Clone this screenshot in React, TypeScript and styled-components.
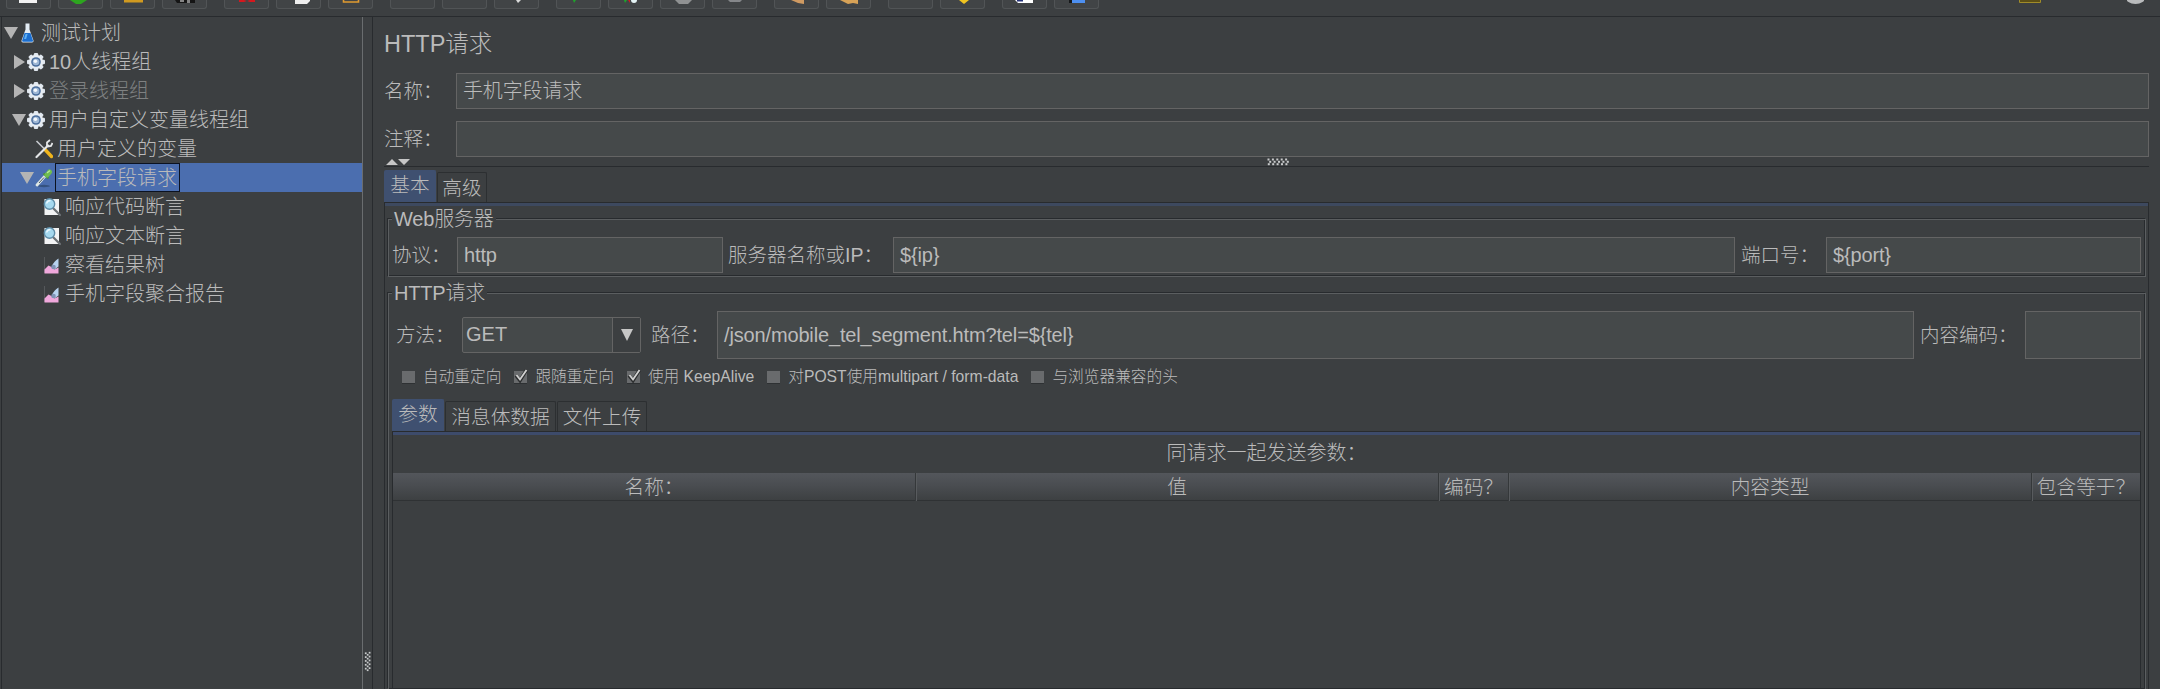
import React from "react";
import styled, { createGlobalStyle } from "styled-components";

const color = {
  bg: "#3c3f41",
  field: "#45494a",
  line: "#646464",
  dark: "#282b2e",
  etch: "#5b5e60",
  text: "#bbbbbb",
  muted: "#7f8182",
  selected: "#4b6eaf",
  tab: "#3f5070",
};

const GlobalStyle = createGlobalStyle`
  * {
    box-sizing: border-box;
  }

  body {
    margin: 0;
    overflow: hidden;
    background: ${color.bg};
    color: ${color.text};
    font-family: "Liberation Sans", "Noto Sans CJK SC", sans-serif;
    font-size: 20px;
    font-weight: 300;
  }
`;

const Window = styled.div`
  display: flex;
  flex-direction: column;
  width: 2160px;
  height: 689px;
  overflow: hidden;
`;

const Toolbar = styled.div`
  display: flex;
  align-items: flex-start;
  flex: none;
  height: 17px;
  padding: 0 16px 0 6px;
  border-bottom: 1px solid ${color.dark};
`;

const ToolGroup = styled.div`
  display: flex;
  gap: 7px;
  margin-right: 17px;
`;

const ToolButton = styled.div`
  width: 45px;
  height: 9px;
  border: 1px solid #515456;
  border-top: 0;
  border-radius: 0 0 3px 3px;
  background: #414446;

  svg {
    display: block;
    margin-left: -1px;
  }
`;

const Indicators = styled.div`
  display: flex;
  gap: 86px;
  margin-left: auto;

  svg {
    display: block;
  }
`;

const Body = styled.div`
  display: flex;
  flex: 1;
  min-height: 0;
`;

const Tree = styled.div`
  flex: none;
  width: 362px;
  margin-left: 1px;
  padding-top: 1px;
  border-left: 1px solid ${color.dark};
  border-right: 1px solid #6a6d6f;
`;

const TreeRow = styled.div<{ $level: number; $selected?: boolean; $disabled?: boolean }>`
  display: flex;
  align-items: center;
  height: 29px;
  padding-left: ${(p) => 2 + p.$level * 8}px;
  background: ${(p) => (p.$selected ? color.selected : "transparent")};
  color: ${(p) => (p.$disabled ? color.muted : color.text)};
  white-space: nowrap;
`;

const Toggle = styled.span`
  flex: none;
  width: 15px;
  height: 14px;

  svg {
    display: block;
  }
`;

const TreeIcon = styled.span`
  flex: none;
  width: 18px;
  height: 20px;
  margin-right: 2px;

  svg {
    display: block;
  }
`;

const TreeLabel = styled.span<{ $focused?: boolean }>`
  height: 29px;
  padding: 0 2px 0 1px;
  border: 1px solid ${(p) => (p.$focused ? "#0b1220" : "transparent")};
  line-height: 28px;
`;

const SideDivider = styled.div`
  display: flex;
  align-items: flex-end;
  flex: none;
  width: 10px;
  padding: 0 1px 15px;
  border-right: 1px solid ${color.dark};
`;

const Main = styled.main`
  display: flex;
  flex-direction: column;
  flex: 1;
  min-width: 0;
  padding: 13px 11px 0;
`;

const Title = styled.h1`
  height: 28px;
  margin: 0;
  font-size: 23.5px;
  font-weight: 300;
  line-height: 28px;
`;

const FormRow = styled.div`
  display: flex;
  align-items: center;
  height: 36px;
  margin-top: 12px;

  ${Title} + & {
    margin-top: 15px;
  }
`;

const Label = styled.span<{ $width: number; $pad?: number }>`
  flex: none;
  width: ${(p) => p.$width}px;
  padding-left: ${(p) => p.$pad ?? 0}px;
  font-size: 19.5px;
  line-height: 24px;
  white-space: nowrap;
`;

const Field = styled.div<{ $width?: number; $height?: number }>`
  flex: ${(p) => (p.$width ? "none" : 1)};
  width: ${(p) => (p.$width ? `${p.$width}px` : "auto")};
  height: ${(p) => p.$height ?? 36}px;
  padding-left: 6px;
  border: 1px solid ${color.line};
  background: ${color.field};
  letter-spacing: -0.15px;
  line-height: ${(p) => (p.$height ?? 36) - 2}px;
`;

const SplitBar = styled.div`
  display: grid;
  grid-template-columns: 1fr auto 1fr;
  align-items: center;
  flex: none;
  height: 10px;
  padding-left: 24px;
  border-bottom: 1px solid ${color.dark};

  svg {
    display: block;
  }
`;

const SplitArrows = styled.div`
  margin-left: -24px;
`;

const Tabs = styled.div<{ $top: number }>`
  display: flex;
  align-items: flex-end;
  flex: none;
  height: 32px;
  margin-top: ${(p) => p.$top}px;
`;

const Tab = styled.div<{ $width: number; $active?: boolean }>`
  width: ${(p) => p.$width}px;
  height: ${(p) => (p.$active ? 32 : 30)}px;
  margin-right: 1px;
  border: 1px solid ${(p) => (p.$active ? color.tab : "#2c2f31")};
  border-bottom: 0;
  border-radius: 2px 2px 0 0;
  background: ${(p) => (p.$active ? color.tab : "transparent")};
  font-size: 19.7px;
  line-height: ${(p) => (p.$active ? 29 : 30)}px;
  text-align: center;
  white-space: nowrap;
`;

const Page = styled.div`
  display: flex;
  flex-direction: column;
  flex: 1;
  min-height: 0;
  padding: 16px 2px 0 3px;
  border: 1px solid ${color.dark};
  border-bottom: 0;
  box-shadow: inset 0 3px 0 #3d495f;
`;

const Group = styled.section<{ $fill?: boolean }>`
  display: flex;
  flex-direction: column;
  flex: ${(p) => (p.$fill ? 1 : "none")};
  height: ${(p) => (p.$fill ? "auto" : "58px")};
  min-height: 0;
  margin-bottom: ${(p) => (p.$fill ? 0 : 16)}px;
  padding: 0 4px 0 3px;
  border: 1px solid ${color.etch};
  border-bottom-width: ${(p) => (p.$fill ? 0 : 1)}px;
  box-shadow: -1px -1px 0 ${color.dark}, inset -1px -1px 0 ${color.dark};
`;

const GroupTitle = styled.h2`
  align-self: flex-start;
  height: 24px;
  margin: -13px 0 0;
  padding: 0 2px;
  background: ${color.bg};
  font-size: 20px;
  font-weight: 300;
  letter-spacing: -0.2px;
  line-height: 24px;
`;

const GroupRow = styled.div<{ $top: number; $height: number; $left?: number }>`
  display: flex;
  align-items: center;
  flex: none;
  height: ${(p) => p.$height}px;
  margin-top: ${(p) => p.$top}px;
  padding-left: ${(p) => p.$left ?? 0}px;
`;

const Select = styled.div`
  display: flex;
  flex: none;
  width: 179px;
  height: 36px;
  border: 1px solid ${color.line};
  border-radius: 2px;
  background: ${color.field};
`;

const SelectValue = styled.span`
  flex: 1;
  padding-left: 3px;
  line-height: 33px;
`;

const SelectArrow = styled.span`
  display: flex;
  align-items: center;
  justify-content: center;
  width: 28px;
  border-left: 1px solid ${color.line};
  background: ${color.bg};
`;

const Checks = styled.div`
  display: flex;
  align-items: center;
  flex: none;
  height: 24px;
  margin-top: 6px;
  padding-left: 9px;
  gap: 12px;
  font-size: 15.7px;
  line-height: 24px;
`;

const Check = styled.div`
  display: flex;
  align-items: center;
  gap: 7px;
  white-space: nowrap;

  svg {
    display: block;
  }
`;

const InnerPage = styled.div`
  display: flex;
  flex-direction: column;
  flex: 1;
  min-height: 0;
  border: 1px solid ${color.dark};
  border-bottom: 0;
  box-shadow: inset 0 3px 0 #3d4b6b;
`;

const Caption = styled.div`
  height: 41px;
  padding-top: 9px;
  line-height: 24px;
  text-align: center;
`;

const HeadRow = styled.div`
  display: grid;
  grid-template-columns: 523px 523px 70px 523px 1fr;
  height: 28px;
  border-bottom: 1px solid #2f3234;
  background: linear-gradient(#53565b, #4a4d51 45%, #3d4042);
`;

const HeadCell = styled.div`
  border-right: 1px solid #35383a;
  box-shadow: 1px 0 0 #585b5e;
  font-size: 19.7px;
  line-height: 28px;
  text-align: center;
  white-space: nowrap;

  &:last-child {
    border-right: 0;
    box-shadow: none;
  }
`;

const toolGroups: React.ReactNode[][] = [
  [
    <path d="M13 0h18v3H13z" fill="#f2f2f2" />,
    <path d="M12 0h17l-6 4h-5z" fill="#2da51f" />,
    <path d="M14 0h19v2.5H14z" fill="#d19a20" />,
    <>
      <path d="M13 0h20v3H15z" fill="#151515" />
      <path d="M18 0h4v2h-4zM25 0h3v3h-3z" fill="#858585" />
    </>,
  ],
  [
    <path d="M15 0h5l3 1 3-1h5v2h-5l-3-1-3 1h-5z" fill="#d5181e" />,
    <path d="M19 0h15v1l-3 3H19z" fill="#eeeeee" />,
    <path d="M15.5 0v2h15V0" fill="none" stroke="#e09a30" strokeWidth="1.6" />,
  ],
  [null, null, <path d="M22 0h5l-3 3z" fill="#dadada" />],
  [
    <path d="M17 0h3l-2 3z" fill="#1fa32a" />,
    <>
      <path d="M16 0h3l-2 3z" fill="#1fa32a" />
      <path d="M20 0h2v3z" fill="#d5181e" />
      <circle cx="26" cy="0" r="3" fill="#e4f3f5" />
    </>,
    <path d="M15 0h17l-4 4h-9z" fill="#8f9192" />,
    <path d="M16 0h14l-2 2H18z" fill="#85878a" />,
  ],
  [
    <path d="M17 0h13v4l-6-1z" fill="#cf9a62" />,
    <path d="M14 0h18v4l-5-1-5 1-4-2z" fill="#d7a257" />,
  ],
  [null, <path d="M19 0h10l-5 4z" fill="#f0c420" />],
  [
    <>
      <path d="M13 0h18v3H16z" fill="#ffffff" />
      <path d="M15 0h6v1.5h-6z" fill="#26337a" />
    </>,
    <>
      <path d="M15 0h4v3h-4z" fill="#16181a" />
      <path d="M18 0h13v3H18z" fill="#4d8ff0" />
    </>,
  ],
];

const GearIcon = () => (
  <svg width="18" height="20" viewBox="0 0 18 20">
    {[0, 45, 90, 135].map((angle) => (
      <rect
        key={angle}
        x="6.8"
        y="1"
        width="4.4"
        height="18"
        rx="1.2"
        fill="#dfe6ee"
        transform={`rotate(${angle} 9 10)`}
      />
    ))}
    <circle cx="9" cy="10" r="7.2" fill="#e8edf3" />
    <circle cx="9" cy="10" r="4.8" fill="#4a6d9c" />
    <circle cx="9" cy="10" r="3.3" fill="#9fb8d6" />
    <circle cx="8.4" cy="9.2" r="1.8" fill="#f4f8fc" />
  </svg>
);

const FlaskIcon = () => (
  <svg width="18" height="20" viewBox="0 0 18 20">
    <path d="M6.5 0.5h4v6l4 11q.4 2-1.5 2H4q-2 0-1.5-2l4-11z" fill="#e3ecf4" />
    <path d="M5.5 10h6l2.5 7.5q.2 1.2-1 1.2H4.2q-1.3 0-1-1.2z" fill="#1c6fd0" />
    <path d="M6.6 11h2l-1.500 5H5z" fill="#5fb0f2" />
  </svg>
);

const ToolsIcon = () => (
  <svg width="18" height="20" viewBox="0 0 18 20">
    <path d="M1.5 2l9 9" stroke="#c8ccd0" strokeWidth="1.6" />
    <path d="M10 10.5l6.5 7" stroke="#f0b51c" strokeWidth="3.4" strokeLinecap="round" />
    <path d="M1.5 18L13 6.5" stroke="#e4e6e8" strokeWidth="2.2" strokeLinecap="round" />
    <path d="M12 7.5V3.5l3-2.5M12.5 7.5l3.5-.5 1.5-3" fill="none" stroke="#e4e6e8" strokeWidth="1.8" />
  </svg>
);

const DropperIcon = () => (
  <svg width="18" height="20" viewBox="0 0 18 20">
    <ellipse cx="9" cy="18" rx="6" ry="1.2" fill="#35527f" />
    <path d="M2 17L11 7" stroke="#dfe7e4" strokeWidth="2.8" strokeLinecap="round" />
    <path d="M4 15L9 9.5" stroke="#4a5a68" strokeWidth="1" />
    <path d="M8.5 5.5l5 5" stroke="#4c8f3a" strokeWidth="1.8" />
    <path d="M12 7L14.500 4" stroke="#6fbd4e" strokeWidth="5" strokeLinecap="round" />
    <path d="M12.5 4.5l2-1.5" stroke="#b8e79c" strokeWidth="1.5" strokeLinecap="round" />
  </svg>
);

const SearchIcon = () => (
  <svg width="18" height="20" viewBox="0 0 18 20">
    <path d="M1.5 2h14.500v16H1.5z" fill="#f2f3f4" />
    <path d="M10 11l7 7" stroke="#6b7074" strokeWidth="2.2" strokeLinecap="round" />
    <circle cx="6.5" cy="7" r="5.2" fill="#a5d8ee" stroke="#5f8da8" strokeWidth="1.4" />
    <path d="M3.5 6.5q1-3 4-3" fill="none" stroke="#e9f8ff" strokeWidth="1.3" />
  </svg>
);

const ChartIcon = () => (
  <svg width="18" height="20" viewBox="0 0 18 20">
    <path d="M1.5 2v16" stroke="#55585b" />
    <path d="M1.5 18.5v-4l4-4 3 1.5 3 2.5 4-2v6z" fill="#f0a8dc" />
    <path d="M9 11q2-5 6.5-7.5v8l-4 3z" fill="#b8d3f0" />
    <circle cx="10.5" cy="12" r="2.3" fill="#7f92b5" />
  </svg>
);

const icons = {
  flask: FlaskIcon,
  gear: GearIcon,
  tools: ToolsIcon,
  dropper: DropperIcon,
  search: SearchIcon,
  chart: ChartIcon,
};

interface TreeNode {
  label: string;
  icon: keyof typeof icons;
  level: number;
  toggle?: "open" | "closed";
  selected?: boolean;
  disabled?: boolean;
}

const nodes: TreeNode[] = [
  { label: "测试计划", icon: "flask", level: 0, toggle: "open" },
  { label: "10人线程组", icon: "gear", level: 1, toggle: "closed" },
  { label: "登录线程组", icon: "gear", level: 1, toggle: "closed", disabled: true },
  { label: "用户自定义变量线程组", icon: "gear", level: 1, toggle: "open" },
  { label: "用户定义的变量", icon: "tools", level: 2 },
  { label: "手机字段请求", icon: "dropper", level: 2, toggle: "open", selected: true },
  { label: "响应代码断言", icon: "search", level: 3 },
  { label: "响应文本断言", icon: "search", level: 3 },
  { label: "察看结果树", icon: "chart", level: 3 },
  { label: "手机字段聚合报告", icon: "chart", level: 3 },
];

const checks = [
  { label: "自动重定向", checked: false },
  { label: "跟随重定向", checked: true },
  { label: "使用 KeepAlive", checked: true },
  { label: "对POST使用multipart / form-data", checked: false },
  { label: "与浏览器兼容的头", checked: false },
];

const columns = ["名称：", "值", "编码？", "内容类型", "包含等于？"];

const dashes = [0, 1, 2, 3, 4];

const VerticalGrip = () => (
  <svg width="8" height="24" viewBox="0 0 8 24">
    {dashes.map((i) => (
      <g key={i} fill="#c8cacb">
        <rect x="1" y={1 + i * 4.4} width="2" height="2" />
        <rect x="3.2" y={2.8 + i * 4.4} width="2" height="2" />
        <rect x="5.4" y={i * 4.4 + 0.4} width="2" height="2" />
      </g>
    ))}
  </svg>
);

const HorizontalGrip = () => (
  <svg width="23" height="8" viewBox="0 0 23 8">
    {dashes.map((i) => (
      <g key={i} fill="#c8cacb">
        <rect x={0.5 + i * 4.4} y="0.5" width="2" height="2" />
        <rect x={2.2 + i * 4.4} y="2.8" width="2" height="2" />
        <rect x={0.8 + i * 4.4} y="5.2" width="2" height="2" />
      </g>
    ))}
  </svg>
);

const CheckBox = ({ checked }: { checked: boolean }) => (
  <svg width="15" height="18" viewBox="0 0 15 18">
    <path d="M1 3h13v13H1z" fill="#696b6d" />
    <path d="M1 15.5h13" stroke="#2e3133" />
    {checked && <path d="M3 7.5l4 5L13.5 2" fill="none" stroke="#2b2d2e" strokeWidth="3.5" />}
    {checked && <path d="M3.5 7l3.5 4.5L13.5 2" fill="none" stroke="#d0d0d0" strokeWidth="1.9" />}
  </svg>
);

const App: React.FC = () => {
  return (
    <Window>
      <GlobalStyle />
      <Toolbar>
        {toolGroups.map((group, i) => (
          <ToolGroup key={i}>
            {group.map((icon, j) => (
              <ToolButton key={j}>
                <svg width="45" height="8" viewBox="0 0 45 8">
                  {icon}
                </svg>
              </ToolButton>
            ))}
          </ToolGroup>
        ))}
        <Indicators>
          <svg width="22" height="4" viewBox="0 0 22 4">
            <path d="M.5 0v2.5h21V0" fill="#5c4f16" stroke="#a08c28" />
          </svg>
          <svg width="17" height="5" viewBox="0 0 17 5">
            <ellipse cx="8.5" cy="-3" rx="10" ry="7" fill="#b9bbbc" />
          </svg>
        </Indicators>
      </Toolbar>

      <Body>
        <Tree>
          {nodes.map((node) => {
            const Icon = icons[node.icon];
            return (
              <TreeRow key={node.label} $level={node.level} $selected={node.selected} $disabled={node.disabled}>
                <Toggle>
                  {node.toggle && (
                    <svg width="14" height="14" viewBox="0 0 14 14">
                      <path d={node.toggle === "open" ? "M0 1h14L7 13z" : "M2 0l11 7-11 7z"} fill="#b4b4b4" />
                    </svg>
                  )}
                </Toggle>
                <TreeIcon>
                  <Icon />
                </TreeIcon>
                <TreeLabel $focused={node.selected}>{node.label}</TreeLabel>
              </TreeRow>
            );
          })}
        </Tree>
        <SideDivider>
          <VerticalGrip />
        </SideDivider>

        <Main>
          <Title>HTTP请求</Title>
          <FormRow>
            <Label $width={72}>名称：</Label>
            <Field>手机字段请求</Field>
          </FormRow>
          <FormRow>
            <Label $width={72}>注释：</Label>
            <Field />
          </FormRow>
          <SplitBar>
            <SplitArrows>
              <svg width="26" height="6" viewBox="0 0 26 6">
                <path d="M2 6l6-6 6 6zM14 0h12l-6 6z" fill="#c6c6c6" />
              </svg>
            </SplitArrows>
            <HorizontalGrip />
          </SplitBar>

          <Tabs $top={3}>
            <Tab $width={52} $active>基本</Tab>
            <Tab $width={50}>高级</Tab>
          </Tabs>
          <Page>
            <Group>
              <GroupTitle>Web服务器</GroupTitle>
              <GroupRow $top={6} $height={36}>
                <Label $width={65}>协议：</Label>
                <Field $width={266}>http</Field>
                <Label $width={170} $pad={5}>服务器名称或IP：</Label>
                <Field>{"${ip}"}</Field>
                <Label $width={91} $pad={6}>端口号：</Label>
                <Field $width={315}>{"${port}"}</Field>
              </GroupRow>
            </Group>

            <Group $fill>
              <GroupTitle>HTTP请求</GroupTitle>
              <GroupRow $top={6} $height={48} $left={4}>
                <Label $width={66}>方法：</Label>
                <Select>
                  <SelectValue>GET</SelectValue>
                  <SelectArrow>
                    <svg width="12" height="12" viewBox="0 0 12 12">
                      <path d="M0 0h12L6 12z" fill="#c6c6c6" />
                    </svg>
                  </SelectArrow>
                </Select>
                <Label $width={76} $pad={10}>路径：</Label>
                <Field $height={48}>{"/json/mobile_tel_segment.htm?tel=${tel}"}</Field>
                <Label $width={111} $pad={6}>内容编码：</Label>
                <Field $width={116} $height={48} />
              </GroupRow>
              <Checks>
                {checks.map((item) => (
                  <Check key={item.label}>
                    <CheckBox checked={item.checked} />
                    {item.label}
                  </Check>
                ))}
              </Checks>

              <Tabs $top={10}>
                <Tab $width={52} $active>参数</Tab>
                <Tab $width={111}>消息体数据</Tab>
                <Tab $width={90}>文件上传</Tab>
              </Tabs>
              <InnerPage>
                <Caption>同请求一起发送参数：</Caption>
                <HeadRow>
                  {columns.map((name) => (
                    <HeadCell key={name}>{name}</HeadCell>
                  ))}
                </HeadRow>
              </InnerPage>
            </Group>
          </Page>
        </Main>
      </Body>
    </Window>
  );
};

export default App;
